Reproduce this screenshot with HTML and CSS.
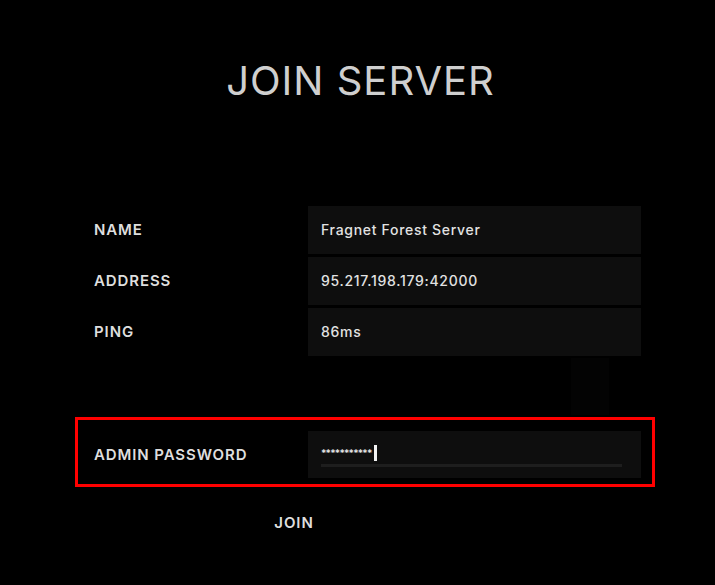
FILE: index.html
```html
<!DOCTYPE html>
<html>
<head>
<meta charset="utf-8">
<link rel="stylesheet" href="styles.css">
</head>
<body>
<div class="page">
  <h1 class="title">JOIN SERVER</h1>
  <div class="info">
    <div class="row"><div class="label">NAME</div><div class="value">Fragnet Forest Server</div></div>
    <div class="row"><div class="label">ADDRESS</div><div class="value">95.217.198.179:42000</div></div>
    <div class="row"><div class="label">PING</div><div class="value">86ms</div></div>
  </div>
  <div class="spacer"><div class="ghost"></div></div>
  <div class="highlight">
    <div class="label">ADMIN PASSWORD</div>
    <div class="pwbox">
      <div class="pwline"><span class="stars">***********</span><span class="caret"></span></div>
      <div class="pwbar"></div>
    </div>
  </div>
  <div class="actions"><div class="join">JOIN</div></div>
</div>
</body>
</html>
```
FILE: styles.css
```css
html, body {
  margin: 0;
  padding: 0;
  background: #000;
}
.page {
  width: 715px;
  height: 585px;
  font-family: Inter, "Noto Sans", sans-serif;
  color: #dcdcdc;
  overflow: hidden;
}
.title {
  margin: 0;
  padding-top: 57px;
  height: 206px;
  box-sizing: border-box;
  text-align: center;
  font-size: 40px;
  line-height: 48px;
  font-weight: 400;
  letter-spacing: 1px;
  color: #cfcfcf;
  padding-left: 6px;
}
.info {
  margin-left: 94px;
  width: 547px;
  display: flex;
  flex-direction: column;
  gap: 3px;
}
.row {
  display: grid;
  grid-template-columns: 214px 333px;
  height: 48px;
  align-items: center;
}
.label {
  font-size: 15px;
  font-weight: 600;
  letter-spacing: 0.9px;
  color: #dedede;
  padding-bottom: 1px;
}
.value {
  height: 48px;
  background: #0e0e0e;
  display: flex;
  align-items: center;
  padding-left: 13px;
  padding-bottom: 1px;
  box-sizing: border-box;
  font-size: 14px;
  font-weight: 500;
  letter-spacing: 0.7px;
  color: #e2e2e2;
}
.spacer {
  height: 61px;
  display: flex;
  padding-left: 571px;
}
.ghost {
  width: 38px;
  height: 57px;
  margin-top: 2px;
  background: #030303;
}
.highlight {
  margin-left: 75px;
  width: 580px;
  height: 70px;
  box-sizing: border-box;
  border: 3px solid #ff0000;
  display: grid;
  grid-template-columns: 214px 333px;
  padding: 11px 0 6px 16px;
  align-items: center;
}
.pwbox {
  height: 47px;
  background: #0e0e0e;
  box-sizing: border-box;
  padding: 14px 19px 0 13px;
}
.pwline {
  display: flex;
  align-items: center;
  height: 16px;
}
.stars {
  font-size: 10px;
  letter-spacing: -0.8px;
  color: #e6e6e6;
  font-weight: 600;
  line-height: 16px;
}
.caret {
  width: 3px;
  height: 16px;
  background: #f2f2f2;
  margin-left: 2px;
}
.pwbar {
  margin-top: 3px;
  height: 3px;
  background: #1e1e1e;
}
.actions {
  display: flex;
  padding-left: 244px;
  padding-top: 26px;
}
.join {
  width: 100px;
  text-align: center;
  font-size: 15px;
  font-weight: 600;
  letter-spacing: 0.9px;
  color: #dedede;
}
```
